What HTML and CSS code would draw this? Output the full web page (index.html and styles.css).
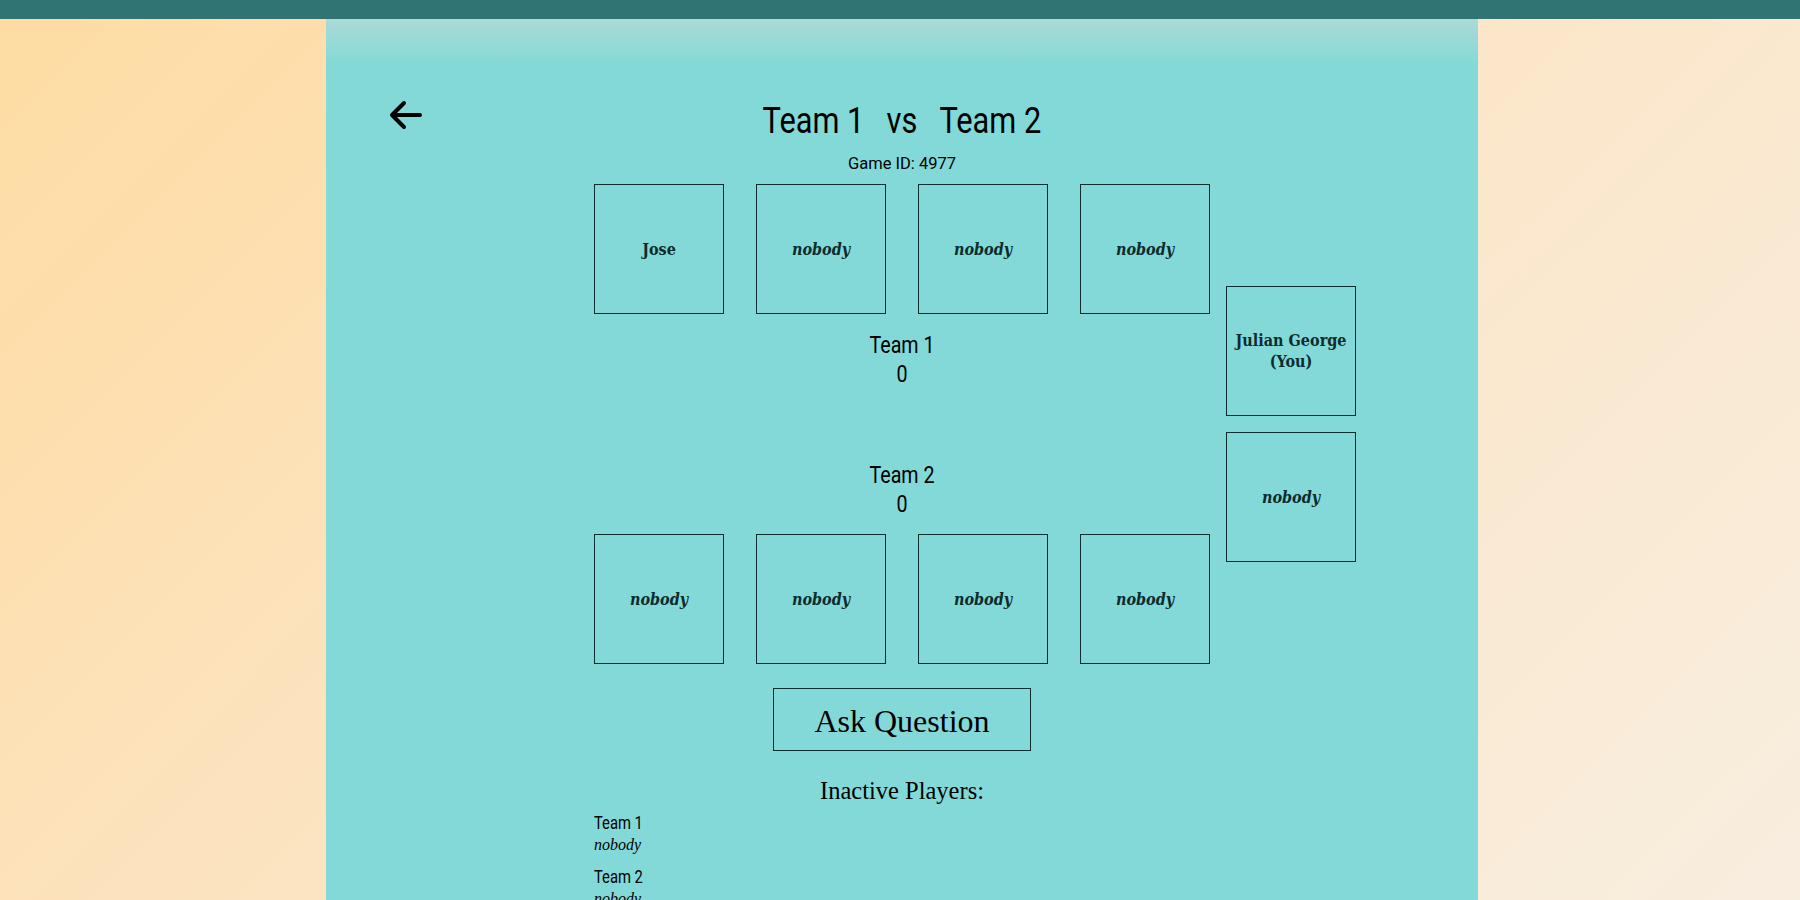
FILE: index.html
```html
<!DOCTYPE html>
<html lang="en">
<head>
<meta charset="utf-8">
<title>Team 1 vs Team 2</title>
<link rel="stylesheet" href="styles.css">
</head>
<body>
<div class="topbar"></div>
<main class="panel">
  <header class="head">
    <a class="back" href="#" aria-label="Back">
      <svg width="36" height="32" viewBox="0 0 36 32" fill="none" stroke="#000" stroke-width="4" stroke-linecap="round" stroke-linejoin="round"><path d="M32 16H4M16 4L4 16L16 28"/></svg>
    </a>
    <h1 class="title"><span>Team 1</span><span>vs</span><span>Team 2</span></h1>
    <div></div>
  </header>
  <p class="gameid">Game ID: 4977</p>

  <section class="board">
    <div class="board-main">
      <div class="row">
        <div class="card">Jose</div>
        <div class="card empty">nobody</div>
        <div class="card empty">nobody</div>
        <div class="card empty">nobody</div>
      </div>
      <div class="mid">
        <div class="score"><div>Team 1</div><div>0</div></div>
        <div class="score"><div>Team 2</div><div>0</div></div>
      </div>
      <div class="row">
        <div class="card empty">nobody</div>
        <div class="card empty">nobody</div>
        <div class="card empty">nobody</div>
        <div class="card empty">nobody</div>
      </div>
    </div>
    <div class="side">
      <div class="card">Julian George (You)</div>
      <div class="card empty">nobody</div>
    </div>
  </section>

  <div class="actions"><button class="ask" type="button">Ask Question</button></div>

  <h2 class="inactive-title">Inactive Players:</h2>
  <div class="inactive">
    <div class="group">
      <div class="team-name">Team 1</div>
      <div class="player">nobody</div>
    </div>
    <div class="group">
      <div class="team-name">Team 2</div>
      <div class="player">nobody</div>
    </div>
  </div>
</main>
</body>
</html>
```

FILE: styles.css
```css
* { box-sizing: border-box; }

html, body { margin: 0; padding: 0; }

body {
  min-height: 100vh;
  background: linear-gradient(135deg, #fedca2 0%, #fce4c3 45%, #f8eee0 100%);
  font-family: Roboto, "Noto Sans", sans-serif;
  color: #000;
}

.topbar {
  height: 19px;
  background: #307473;
}

.panel {
  width: 1152px;
  margin-left: 326px;
  min-height: 881px;
  padding-top: 79px;
  padding-bottom: 20px;
  background: linear-gradient(to bottom, #abdad6 0px, #83d9d7 46px, #83d9d7 100%);
}

.head {
  display: grid;
  grid-template-columns: 1fr auto 1fr;
  align-items: start;
}

.back {
  display: block;
  width: 36px;
  height: 32px;
  margin-left: 62px;
  margin-top: 1px;
}

.back svg { display: block; }

.title {
  margin: 0;
  display: flex;
  gap: 27px;
  font-family: Roboto, sans-serif;
  font-weight: 400;
  font-size: 37.5px;
  line-height: 44px;
  transform: scaleX(0.82);
  transform-origin: center;
}

.gameid {
  margin: 12px 0 0;
  text-align: center;
  font-family: Roboto, sans-serif;
  font-size: 16.5px;
  line-height: 19px;
}

.board {
  margin-top: 11px;
  display: grid;
  grid-template-columns: 1fr 648px 1fr;
}

.board-main {
  grid-column: 2;
  display: flex;
  flex-direction: column;
}

.row {
  display: flex;
  gap: 32px;
  padding: 0 16px;
}

.card {
  width: 130px;
  height: 130px;
  border: 1px solid #0c2c2d;
  display: flex;
  align-items: center;
  justify-content: center;
  text-align: center;
  padding: 6px 6px;
  font-family: "DejaVu Serif Condensed", "DejaVu Serif", serif;
  font-stretch: condensed;
  font-weight: 700;
  font-size: 16px;
  line-height: 21px;
  color: #0c2c2d;
}

.card.empty { font-style: italic; }

.mid {
  display: flex;
  flex-direction: column;
  gap: 72px;
  padding: 17px 0 15px;
}

.score {
  text-align: center;
  font-size: 24px;
  line-height: 29px;
  transform: scaleX(0.82);
  transform-origin: center;
}

.side {
  grid-column: 3;
  align-self: center;
  display: flex;
  flex-direction: column;
  gap: 16px;
}

.actions {
  margin-top: 24px;
  display: flex;
  justify-content: center;
}

.ask {
  width: 258px;
  height: 63px;
  padding: 14px 0 10px;
  border: 1px solid #0c2c2d;
  background: transparent;
  color: #000;
  font-family: "Liberation Serif", serif;
  font-size: 32px;
  line-height: 37px;
  cursor: pointer;
}

.inactive-title {
  margin: 25px 0 0;
  text-align: center;
  font-family: "Liberation Serif", serif;
  font-weight: 400;
  font-size: 24.5px;
  line-height: 29px;
}

.inactive {
  width: 648px;
  margin: 8px auto 0;
  padding: 0 16px;
}

.group + .group { margin-top: 9.5px; }

.team-name {
  font-size: 18px;
  line-height: 20px;
  transform: scaleX(0.82);
  transform-origin: left;
}

.player {
  font-family: "Liberation Serif", serif;
  font-style: italic;
  font-size: 16px;
  line-height: 24px;
}
```
